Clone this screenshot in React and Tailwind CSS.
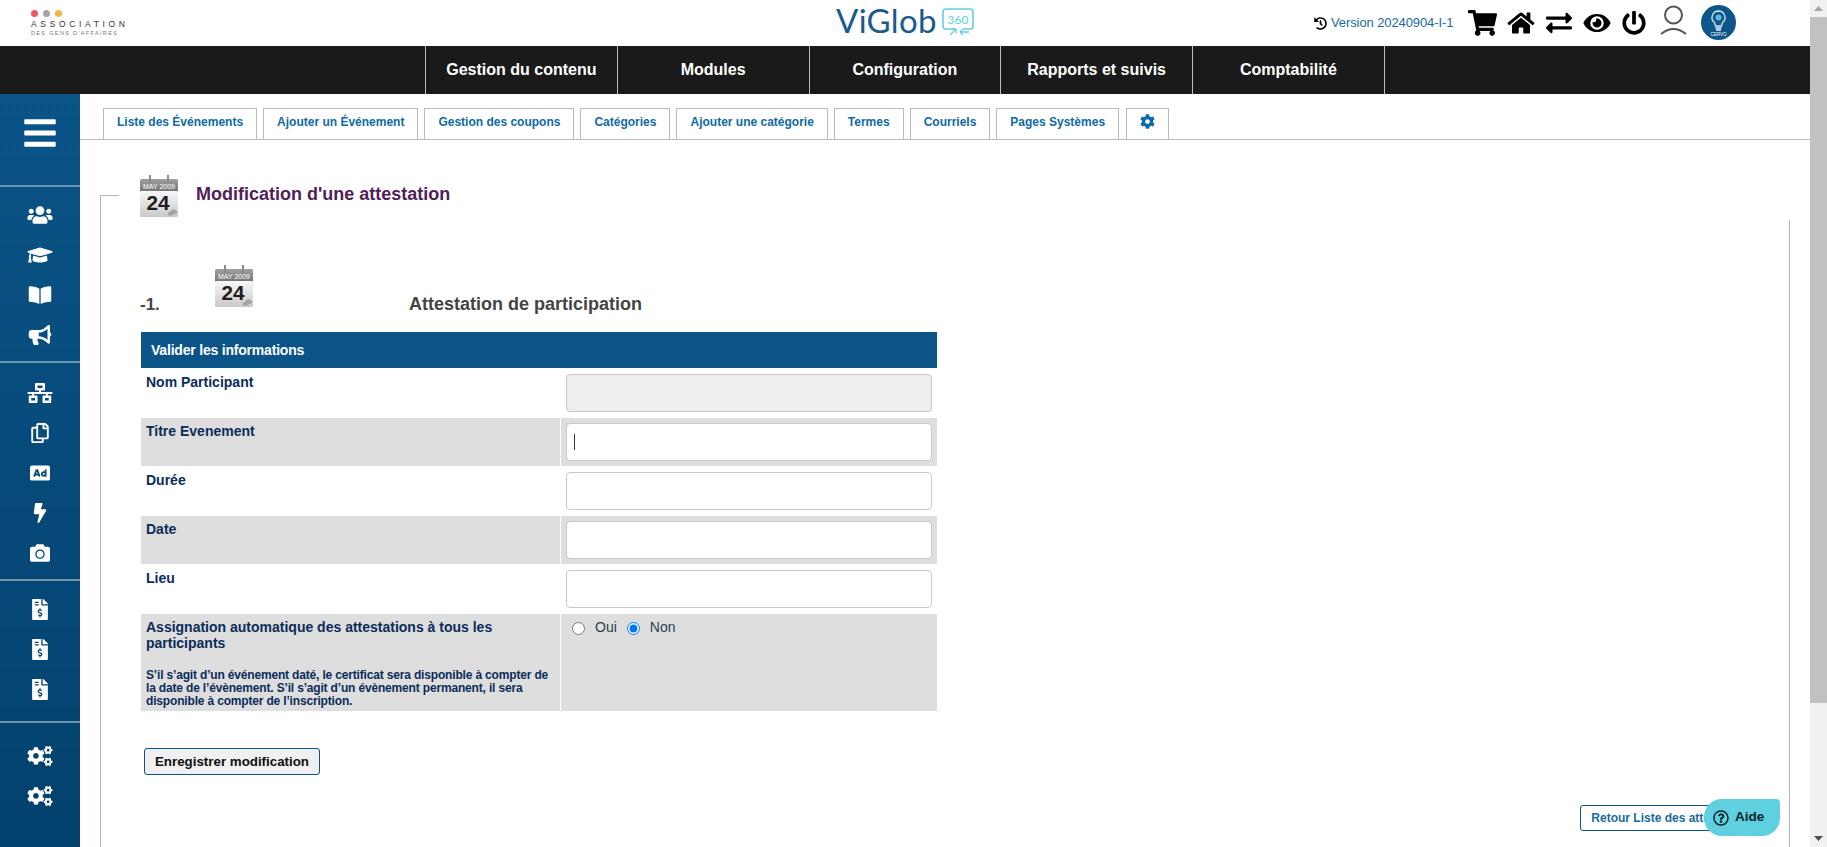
import {
  FaAd,
  FaBars,
  FaBolt,
  FaBookOpen,
  FaBullhorn,
  FaCamera,
  FaCog,
  FaCogs,
  FaEye,
  FaExchangeAlt,
  FaFileInvoiceDollar,
  FaGraduationCap,
  FaHistory,
  FaHome,
  FaNetworkWired,
  FaPowerOff,
  FaRegCopy,
  FaRegQuestionCircle,
  FaShoppingCart,
  FaUsers,
} from "react-icons/fa";

const navItems = ["Gestion du contenu", "Modules", "Configuration", "Rapports et suivis", "Comptabilité"];
const tabs = [
  "Liste des Événements",
  "Ajouter un Événement",
  "Gestion des coupons",
  "Catégories",
  "Ajouter une catégorie",
  "Termes",
  "Courriels",
  "Pages Systèmes",
];

function CalendarIcon() {
  return (
    <svg width="38" height="42" viewBox="0 0 38 42" className="shrink-0">
      <defs>
        <linearGradient id="calHead" x1="0" y1="0" x2="0" y2="1">
          <stop offset="0" stopColor="#a0a0a0" />
          <stop offset="1" stopColor="#747474" />
        </linearGradient>
        <linearGradient id="calBody" x1="0" y1="0" x2="0" y2="1">
          <stop offset="0" stopColor="#f8f8f8" />
          <stop offset="1" stopColor="#c9c9c9" />
        </linearGradient>
      </defs>
      <rect x="0" y="4" width="38" height="13" rx="1.5" fill="url(#calHead)" />
      <rect x="0" y="16" width="38" height="26" rx="1.5" fill="url(#calBody)" />
      <rect x="9" y="0" width="2" height="8" fill="#8a8a8a" />
      <rect x="27" y="0" width="2" height="8" fill="#8a8a8a" />
      <text x="19" y="14" textAnchor="middle" fontSize="6.5" fill="#fff" textLength="32" lengthAdjust="spacingAndGlyphs">
        MAY 2009
      </text>
      <text x="18" y="35" textAnchor="middle" fontSize="21" fontWeight="700" fill="#1d1d1d" textLength="23" lengthAdjust="spacingAndGlyphs">
        24
      </text>
      <path d="M27 39 L33 34 L37 36 L37 38 L30 41 Z" fill="#a5a5a5" />
    </svg>
  );
}

function ViglobLogo() {
  return (
    <div className="ml-[-1px] flex items-start">
      <span className="[font-family:Lato,sans-serif] text-[33px] leading-[41px] font-normal tracking-[0.3px] text-[#1a5a8c]">ViGlob</span>
      <svg width="33" height="30" viewBox="0 0 33 30" className="mt-[8px] ml-[5px]">
        <path d="M12 21 H4 Q1 21 1 18 V4 Q1 1 4 1 H28 Q31 1 31 4 V18 Q31 21 28 21 H21" fill="none" stroke="#62cfe0" strokeWidth="1.6" />
        <text x="16" y="15.5" textAnchor="middle" fontSize="12" fill="#62cfe0" className="[font-family:Lato,sans-serif]">
          360
        </text>
        <path d="M8 27 L14 21 M14 21 H10 M14 21 V25" fill="none" stroke="#62cfe0" strokeWidth="1.3" />
        <path d="M18 24 H27 M18 24 L21 21 M18 24 L21 27" fill="none" stroke="#62cfe0" strokeWidth="1.3" />
      </svg>
    </div>
  );
}

function Header() {
  return (
    <header className="flex h-[46px] items-start">
      {/* Association logo */}
      <div className="flex w-[1314px] shrink-0">
        <div className="ml-[31px] w-[806px] pt-[10px]">
          <div className="flex gap-[5px]">
            <span className="h-[7px] w-[7px] rounded-full bg-[#f0555d]"></span>
            <span className="h-[7px] w-[7px] rounded-full bg-[#a5a5a8]"></span>
            <span className="h-[7px] w-[7px] rounded-full bg-[#f6b63f]"></span>
          </div>
          <div className="mt-[2px] text-[8.5px] leading-[10px] tracking-[3.65px] text-[#333]">ASSOCIATION</div>
          <div className="mt-[1px] text-[5.5px] leading-[7px] tracking-[1.35px] text-[#777]">DES GENS D'AFFAIRES</div>
        </div>
        <ViglobLogo />
      </div>

      {/* Version and shortcuts */}
      <div className="flex h-[46px] items-center">
        <FaHistory className="h-[13px] w-[13px] text-black" />
        <span className="ml-[4px] w-[137px] text-[13px] tracking-[-0.1px] text-[#1a6a9e]">Version 20240904-I-1</span>
        <FaShoppingCart className="mt-[-1px] h-[26px] w-[29px] text-black" />
        <FaHome className="ml-[10px] h-[24px] w-[28px] text-black" />
        <FaExchangeAlt className="ml-[11px] h-[26px] w-[26px] text-black" />
        <FaEye className="ml-[11px] h-[24px] w-[28px] text-black" />
        <FaPowerOff className="ml-[11px] h-[24px] w-[24px] text-black" />
        <svg width="27" height="31" viewBox="0 0 27 31" className="mt-[-6px] ml-[14px]">
          <circle cx="13.5" cy="10" r="8.5" fill="none" stroke="#555" strokeWidth="2" />
          <path d="M1 29 Q13.5 19 26 29" fill="none" stroke="#555" strokeWidth="2" />
        </svg>
        <svg width="35" height="35" viewBox="0 0 35 35" className="mt-[-1px] ml-[14px]">
          <circle cx="17.5" cy="17.5" r="17.5" fill="#0d5689" />
          <path d="M17.5 6 a6.5 6.5 0 0 1 4 11.6 L20.5 21 H14.5 L13.5 17.6 A6.5 6.5 0 0 1 17.5 6 Z" fill="none" stroke="#cfe6f2" strokeWidth="1.3" />
          <circle cx="17.5" cy="12.5" r="3" fill="#5fb8dd" />
          <path d="M14.5 23 H20.5 M15 25 H20" stroke="#e8f2f7" strokeWidth="1.3" />
          <text x="17.5" y="31" textAnchor="middle" fontSize="4.5" fill="#fff">
            CERVO
          </text>
        </svg>
      </div>
    </header>
  );
}

function Sidebar() {
  const icon = "h-[20px] w-[26px] text-white";
  const row = "flex h-[40px] items-center justify-center";
  return (
    <aside className="flex w-[80px] shrink-0 flex-col bg-gradient-to-b from-[#0b5488] to-[#03416d]">
      <div className="flex h-[93px] items-start justify-center border-b-2 border-[#6f94ae] pt-[21px]">
        <FaBars className="h-[36px] w-[32px] text-white" />
      </div>
      <div className="h-[176px] border-b-2 border-[#6f94ae] pt-[8px]">
        <div className={row}><FaUsers className={icon} /></div>
        <div className={row}><FaGraduationCap className={icon} /></div>
        <div className={row}><FaBookOpen className={icon} /></div>
        <div className={row}><FaBullhorn className={icon} /></div>
      </div>
      <div className="h-[218px] border-b-2 border-[#6f94ae] pt-[10px]">
        <div className={row}><FaNetworkWired className={icon} /></div>
        <div className={row}><FaRegCopy className="h-[20px] w-[20px] text-white" /></div>
        <div className={row}><FaAd className="h-[20px] w-[22px] text-white" /></div>
        <div className={row}><FaBolt className="h-[20px] w-[16px] text-white" /></div>
        <div className={row}><FaCamera className={icon} /></div>
      </div>
      <div className="h-[142px] border-b-2 border-[#6f94ae] pt-[8px]">
        <div className={row}><FaFileInvoiceDollar className="h-[21px] w-[16px] text-white" /></div>
        <div className={row}><FaFileInvoiceDollar className="h-[21px] w-[16px] text-white" /></div>
        <div className={row}><FaFileInvoiceDollar className="h-[21px] w-[16px] text-white" /></div>
      </div>
      <div className="pt-[13px]">
        <div className={row}><FaCogs className={icon} /></div>
        <div className={row}><FaCogs className={icon} /></div>
      </div>
    </aside>
  );
}

function FormRow({ label, grey, disabled, caret }) {
  return (
    <div className={`flex h-[49px] ${grey ? "border-t border-white bg-[#dedede]" : "bg-white"}`}>
      <div className={`w-[420px] shrink-0 border-r border-white pl-[5px] text-[14px] leading-[16px] font-bold text-[#0b2c5a] ${grey ? "pt-[5px]" : "pt-[6px]"}`}>{label}</div>
      <div className={`relative flex-1 pl-[5px] ${grey ? "pt-[5px]" : "pt-[6px]"}`}>
        <input
          type="text"
          disabled={disabled}
          className={`block h-[38px] w-[366px] rounded-[4px] border border-[#c8c8c8] ${disabled ? "bg-[#eeeeee]" : "bg-white"}`}
        />
        {caret && <span className="absolute top-[16px] left-[13px] h-[16px] w-px bg-[#333]"></span>}
      </div>
    </div>
  );
}

function AttestationForm() {
  return (
    <div className="w-[796px]">
      <div className="flex h-[36px] items-center bg-[#0b5488] px-[10px] text-[14px] font-bold tracking-[-0.2px] text-white">Valider les informations</div>
      <FormRow label="Nom Participant" disabled />
      <FormRow label="Titre Evenement" grey caret />
      <FormRow label="Durée" />
      <FormRow label="Date" grey />
      <FormRow label="Lieu" />
      <div className="flex h-[98px] border-t border-white bg-[#dedede]">
        <div className="w-[420px] shrink-0 border-r border-white pt-[5px] pl-[5px] font-bold text-[#0b2c5a]">
          <div className="text-[14px] leading-[16px]">Assignation automatique des attestations à tous les participants</div>
          <div className="mt-[18px] w-[410px] text-[12px] leading-[13px] tracking-[-0.17px]">
            S’il s’agit d’un événement daté, le certificat sera disponible à compter de la date de l’évènement. S’il s’agit d’un évènement permanent, il sera disponible à compter de l’inscription.
          </div>
        </div>
        <div className="flex flex-1 items-start pt-[5px] pl-[11px] text-[14px] leading-[16px] text-[#2b3e50]">
          <input type="radio" name="assign" readOnly className="mt-[3px] h-[13px] w-[13px]" />
          <span className="ml-[10px]">Oui</span>
          <input type="radio" name="assign" readOnly checked className="mt-[3px] ml-[10px] h-[13px] w-[13px]" />
          <span className="ml-[10px]">Non</span>
        </div>
      </div>
    </div>
  );
}

function ScrollBar() {
  return (
    <div className="flex w-[17px] shrink-0 flex-col bg-[#f1f1f1]">
      <div className="flex h-[17px] items-center justify-center">
        <svg width="9" height="5" viewBox="0 0 9 5"><path d="M4.5 0 L9 5 H0 Z" fill="#a3a3a3" /></svg>
      </div>
      <div className="h-[686px] bg-[#c1c1c1]"></div>
      <div className="flex-1"></div>
      <div className="flex h-[17px] items-center justify-center">
        <svg width="9" height="5" viewBox="0 0 9 5"><path d="M0 0 H9 L4.5 5 Z" fill="#505050" /></svg>
      </div>
    </div>
  );
}

export default function App() {
  return (
    <div className="relative flex h-[847px] w-[1827px] overflow-hidden bg-white [font-family:'Liberation_Sans',Arial,sans-serif]">
      <div className="flex w-[1810px] shrink-0 flex-col">
        <Header />

        {/* Top nav */}
        <nav className="flex h-[48px] shrink-0 bg-[#1a1a1a] pl-[425px]">
          {navItems.map((item) => (
            <div key={item} className="flex w-[191.75px] items-center justify-center border-l border-[#bdbdbd] text-[16px] font-bold text-white last:w-[192.75px] last:border-r">
              {item}
            </div>
          ))}
        </nav>

        <div className="flex min-h-0 flex-1">
          <Sidebar />

          <main className="flex min-w-0 flex-1 flex-col">
            {/* Tabs */}
            <div className="flex h-[46px] shrink-0 items-end gap-[6px] border-b border-[#bbbbbb] pl-[23px]">
              {tabs.map((tab) => (
                <div key={tab} className="mb-[-1px] flex h-[32px] items-center border border-b-0 border-[#bbbbbb] px-[13px] pb-[6px] text-[12px] font-bold text-[#0f6aa5]">
                  {tab}
                </div>
              ))}
              <div className="mb-[-1px] ml-px flex h-[32px] w-[43px] items-center justify-center border border-b-0 border-[#bbbbbb] pb-[6px]">
                <FaCog className="h-[15px] w-[15px] text-[#0f6aa5]" />
              </div>
            </div>

            {/* Fieldset-like panel */}
            <div className="relative min-h-0 flex-1 pt-[35px] pl-[60px]">
              <span className="absolute top-[55px] bottom-0 left-[20px] w-px bg-[#b5b5b5]"></span>
              <span className="absolute top-[55px] left-[20px] h-px w-[19px] bg-[#b5b5b5]"></span>
              <span className="absolute top-[80px] right-[20px] bottom-0 w-px bg-[#b5b5b5]"></span>

              <div className="flex h-[42px] items-start">
                <CalendarIcon />
                <h1 className="mt-[8px] ml-[18px] text-[18px] leading-[22px] font-bold text-[#4f2157]">Modification d'une attestation</h1>
              </div>

              <div className="mt-[48px] flex h-[42px] items-start">
                <span className="mt-[30px] w-[75px] shrink-0 text-[17px] leading-[20px] font-bold text-[#444]">-1.</span>
                <CalendarIcon />
                <h2 className="mt-[28px] ml-[156px] text-[18px] leading-[22px] font-bold text-[#444]">Attestation de participation</h2>
              </div>

              <div className="mt-[25px] ml-px">
                <AttestationForm />
              </div>

              <button className="mt-[37px] ml-[4px] block h-[27px] w-[176px] rounded-[3px] border border-[#0b5488] bg-[#f0f0f0] text-[13.33px] font-bold text-[#111]">
                Enregistrer modification
              </button>

              <div className="mt-[30px] flex justify-end pr-[43px]">
                <button className="h-[26px] rounded-[3px] border border-[#0b5488] bg-white px-[10px] text-[12px] font-bold text-[#1a6a9e]">
                  Retour Liste des attestations
                </button>
              </div>
            </div>
          </main>
        </div>
      </div>

      <ScrollBar />

      {/* Floating help button */}
      <button className="absolute right-[47px] bottom-[11px] flex h-[37px] w-[76px] items-center gap-[6px] rounded-[18px] rounded-tr-[4px] bg-[#5ed0e0] pl-[9px] text-[13.5px] font-bold text-[#10202a]">
        <FaRegQuestionCircle className="h-[16px] w-[16px]" />
        Aide
      </button>
    </div>
  );
}
